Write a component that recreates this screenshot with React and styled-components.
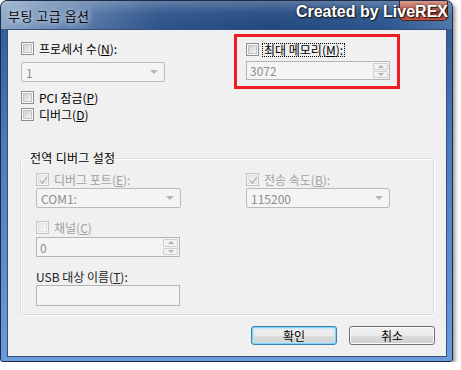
import React from 'react';
import styled, { createGlobalStyle } from 'styled-components';

const GlobalStyle = createGlobalStyle`
  html, body {
    margin: 0;
    padding: 0;
    background: #ffffff;
  }
  body {
    font-family: "Noto Sans CJK KR", "Liberation Sans", sans-serif;
    font-size: 12px;
    color: #000;
  }
`;

const Window = styled.div`
  position: relative;
  width: 453px;
  height: 362px;
  box-sizing: border-box;
  display: flex;
  flex-direction: column;
  padding: 0 5px 4px 6px;
  border: 1px solid #1c2c46;
  border-radius: 7px 7px 3px 3px;
  background: linear-gradient(180deg, #2e5791 0%, #4b7bbd 40%, #6c9bd9 100%);
  box-shadow: 2px 3px 4px rgba(0, 0, 0, 0.45);
`;

const TitleBar = styled.div`
  position: relative;
  height: 28px;
  margin: 0 -5px 0 -6px;
  padding-left: 7px;
  display: flex;
  align-items: center;
  border-radius: 6px 6px 0 0;
  background:
    linear-gradient(180deg, rgba(255, 255, 255, 0.25) 0%, rgba(255, 255, 255, 0.05) 45%, rgba(0, 0, 0, 0) 100%),
    linear-gradient(90deg, #8ba6c6 0%, #6585b0 12%, #2d538b 35%, #21487f 60%, #2b558e 85%, #4d75a8 100%);
`;

const Title = styled.span`
  font-size: 13px;
  color: #0c0c0c;
  letter-spacing: 0.5px;
  text-shadow: 0 0 6px rgba(230, 240, 255, 0.95), 0 0 10px rgba(230, 240, 255, 0.8);
`;

const CloseButton = styled.div`
  position: absolute;
  top: 0;
  right: 4px;
  width: 47px;
  height: 19px;
  border: 1px solid #4b2320;
  border-top: none;
  border-radius: 0 0 5px 5px;
  background: linear-gradient(180deg, #d99a8e 0%, #c26656 45%, #a8372a 55%, #c85a45 100%);
`;

const Watermark = styled.span`
  position: absolute;
  top: 2px;
  right: 4px;
  font-family: "Liberation Sans", "DejaVu Sans", sans-serif;
  font-weight: bold;
  font-size: 16px;
  color: #ffffff;
  text-shadow: 1px 1px 1px #1a1a1a, 0 0 3px rgba(0, 0, 0, 0.7);
`;

const Client = styled.div`
  flex: 1;
  display: flex;
  flex-direction: column;
  background: #f0f0f0;
  border: 1px solid #34507a;
`;

const TopRow = styled.div`
  display: flex;
  padding: 4px 0 0 13px;
`;

const LeftCol = styled.div`
  width: 213px;
  padding-top: 8px;
  display: flex;
  flex-direction: column;
`;

const RedBox = styled.div`
  width: 166px;
  height: 55px;
  box-sizing: border-box;
  border: 3px solid #ec1c24;
  padding: 6px 0 0 9px;
  display: flex;
  flex-direction: column;
`;

const CheckRow = styled.label`
  display: flex;
  align-items: center;
  gap: 3px;
  height: 13px;
  margin-top: ${p => p.$mt || 0}px;
  color: ${p => (p.$disabled ? '#a0a0a0' : '#000')};
  white-space: nowrap;
  line-height: 13px;
`;

const Box = styled.span`
  position: relative;
  width: 13px;
  height: 13px;
  box-sizing: border-box;
  flex-shrink: 0;
  border: 1px solid ${p => (p.$disabled ? '#c5c5c5' : '#8e8f8f')};
  background: ${p => (p.$disabled ? '#f4f4f4' : '#fafafa')};
  &::after {
    content: '';
    position: absolute;
    inset: 1px;
    background: ${p => (p.$disabled
      ? 'linear-gradient(135deg, #e9e9e9, #f7f7f7)'
      : 'linear-gradient(135deg, #cfcfcf, #f3f3f3)')};
    border: 1px solid ${p => (p.$disabled ? '#e2e2e2' : '#c2c2c2')};
    box-sizing: border-box;
  }
  svg {
    position: absolute;
    left: 1px;
    top: 1px;
    z-index: 1;
  }
`;

const Label = styled.span`
  padding: 0 1px;
  border: 1px dotted ${p => (p.$focus ? '#000' : 'transparent')};
  line-height: 12px;
  u {
    text-decoration: underline;
    text-underline-offset: 1px;
  }
`;

const Combo = styled.div`
  width: ${p => p.$w || 144}px;
  height: 20px;
  margin-top: ${p => p.$mt || 0}px;
  box-sizing: border-box;
  border: 1px solid #b9bcbe;
  border-radius: 2px;
  background: #f4f4f4;
  display: flex;
  align-items: center;
  justify-content: space-between;
  padding: 0 5px 0 4px;
  color: #8d8d8d;
  font-size: 12px;
`;

const Arrow = styled.span`
  width: 0;
  height: 0;
  border-left: 4px solid transparent;
  border-right: 4px solid transparent;
  border-top: 4px solid #b5b5b5;
  margin-right: 1px;
`;

const Spin = styled.div`
  width: 144px;
  height: ${p => p.$h || 20}px;
  margin-top: ${p => p.$mt || 0}px;
  box-sizing: border-box;
  border: 1px solid #b5b5b5;
  background: #f4f4f4;
  display: flex;
  align-items: stretch;
  color: #8d8d8d;
`;

const SpinValue = styled.span`
  flex: 1;
  display: flex;
  align-items: center;
  padding-left: 3px;
`;

const SpinButtons = styled.div`
  width: 15px;
  margin: 1px;
  display: flex;
  flex-direction: column;
  gap: 1px;
`;

const SpinBtn = styled.div`
  flex: 1;
  border: 1px solid #cfcfcf;
  border-radius: 1px;
  background: #f2f2f2;
  display: flex;
  align-items: center;
  justify-content: center;
  &::after {
    content: '';
    border-left: 3px solid transparent;
    border-right: 3px solid transparent;
    ${p => (p.$up ? 'border-bottom: 3px solid #b0b0b0;' : 'border-top: 3px solid #b0b0b0;')}
  }
`;

const GroupBox = styled.div`
  position: relative;
  margin: 37px 12px 0 12px;
  height: 157px;
  box-sizing: border-box;
  border: 1px solid #d5dfe5;
  border-radius: 3px;
  box-shadow: inset 1px 1px 0 #ffffff, 1px 1px 0 #ffffff;
  padding: 14px 0 0 15px;
  display: grid;
  grid-template-columns: 210px 1fr;
`;

const GroupTitle = styled.span`
  position: absolute;
  top: -8px;
  left: 8px;
  padding: 0 1px;
  background: #f0f0f0;
  line-height: 14px;
  letter-spacing: 0.3px;
`;

const Col = styled.div`
  display: flex;
  flex-direction: column;
`;

const PlainLabel = styled.div`
  margin-top: 13px;
  line-height: 14px;
  color: #222;
  u {
    text-underline-offset: 1px;
  }
`;

const TextBox = styled.div`
  width: 144px;
  height: 21px;
  margin-top: 1px;
  box-sizing: border-box;
  border: 1px solid #b5b5b5;
  background: #f4f4f4;
`;

const ButtonRow = styled.div`
  display: flex;
  justify-content: flex-end;
  gap: 12px;
  padding: 11px 11px 0 0;
`;

const Button = styled.button`
  width: 86px;
  height: 19px;
  padding: 0;
  box-sizing: border-box;
  font-family: inherit;
  font-size: 12px;
  color: #000;
  border-radius: 3px;
  border: 1px solid ${p => (p.$default ? '#3c7fb1' : '#707070')};
  background: linear-gradient(180deg, #f2f2f2 0%, #ebebeb 50%, #dddddd 51%, #cfcfcf 100%);
  box-shadow: ${p => (p.$default ? 'inset 0 0 0 1px #7fd2f6, inset 0 0 2px 2px #c4e5f6' : 'inset 0 0 0 1px #fcfcfc')};
  line-height: 15px;
`;

const Check = ({ checked, disabled }) => (
  <Box $disabled={disabled}>
    {checked && (
      <svg width="11" height="11" viewBox="0 0 11 11">
        <path d="M2 5.5 L4.5 8 L9 2" fill="none" stroke="#b9b9b9" strokeWidth="1.6" />
      </svg>
    )}
  </Box>
);

export default function App() {
  return (
    <>
      <GlobalStyle />
      <Window>
        <TitleBar>
          <Title>부팅 고급 옵션</Title>
          <CloseButton />
          <Watermark>Created by LiveREX</Watermark>
        </TitleBar>
        <Client>
          <TopRow>
            <LeftCol>
              <CheckRow>
                <Check />
                <Label>프로세서 수(<u>N</u>):</Label>
              </CheckRow>
              <Combo $mt={7}>
                <span>1</span>
                <Arrow />
              </Combo>
              <CheckRow $mt={9}>
                <Check />
                <Label>PCI 잠금(<u>P</u>)</Label>
              </CheckRow>
              <CheckRow $mt={4}>
                <Check />
                <Label>디버그(<u>D</u>)</Label>
              </CheckRow>
            </LeftCol>
            <RedBox>
              <CheckRow>
                <Check />
                <Label $focus>최대 메모리(<u>M</u>):</Label>
              </CheckRow>
              <Spin $mt={5} $h={19}>
                <SpinValue>3072</SpinValue>
                <SpinButtons>
                  <SpinBtn $up />
                  <SpinBtn />
                </SpinButtons>
              </Spin>
            </RedBox>
          </TopRow>

          <GroupBox>
            <GroupTitle>전역 디버그 설정</GroupTitle>
            <Col>
              <CheckRow $disabled>
                <Check checked disabled />
                <Label>디버그 포트(<u>E</u>):</Label>
              </CheckRow>
              <Combo $mt={2} $w={145}>
                <span>COM1:</span>
                <Arrow />
              </Combo>
              <CheckRow $disabled $mt={13}>
                <Check disabled />
                <Label>채널(<u>C</u>)</Label>
              </CheckRow>
              <Spin $mt={3}>
                <SpinValue>0</SpinValue>
                <SpinButtons>
                  <SpinBtn $up />
                  <SpinBtn />
                </SpinButtons>
              </Spin>
              <PlainLabel>USB 대상 이름(<u>T</u>):</PlainLabel>
              <TextBox />
            </Col>
            <Col>
              <CheckRow $disabled>
                <Check checked disabled />
                <Label>전송 속도(<u>B</u>):</Label>
              </CheckRow>
              <Combo $mt={2}>
                <span>115200</span>
                <Arrow />
              </Combo>
            </Col>
          </GroupBox>

          <ButtonRow>
            <Button $default>확인</Button>
            <Button>취소</Button>
          </ButtonRow>
        </Client>
      </Window>
    </>
  );
}
